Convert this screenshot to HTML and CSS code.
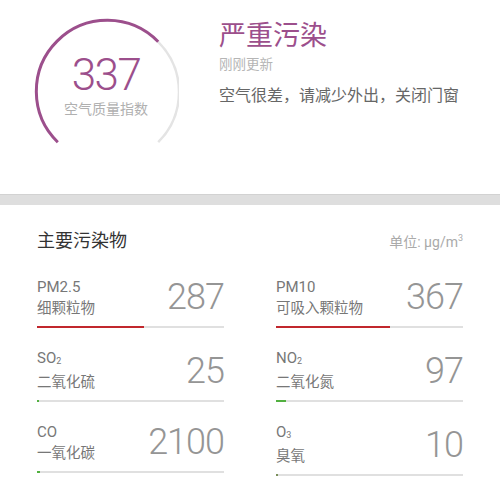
FILE: index.html
```html
<!DOCTYPE html>
<html lang="zh-CN">
<head>
<meta charset="utf-8">
<title>空气质量</title>
<link rel="stylesheet" href="styles.css">
</head>
<body>
<header class="summary">
  <div class="gauge">
    <svg class="gauge-arc" width="146" height="130" viewBox="0 0 146 130">
      <path d="M125.2 24.8 A71 71 0 0 1 125.2 125.2" fill="none" stroke="#e4e4e4" stroke-width="2.5"/>
      <path d="M24.8 125.2 A71 71 0 1 1 125.2 24.8" fill="none" stroke="#9c4f8c" stroke-width="3"/>
    </svg>
    <div class="gauge-text">
      <div class="aqi">337</div>
      <div class="aqi-label">空气质量指数</div>
    </div>
  </div>
  <div class="status">
    <div class="level">严重污染</div>
    <div class="updated">刚刚更新</div>
    <div class="advice">空气很差，请减少外出，关闭门窗</div>
  </div>
</header>
<div class="divider"></div>
<section class="pollutants">
  <div class="section-head">
    <h2 class="section-title">主要污染物</h2>
    <div class="unit">单位: μg/m<sup>3</sup></div>
  </div>
  <div class="grid">
    <div class="item">
      <div class="item-row">
        <div class="names"><div class="code">PM2.5</div><div class="cn">细颗粒物</div></div>
        <div class="value">287</div>
      </div>
      <div class="bar"><div class="fill red" style="width:57%"></div></div>
    </div>
    <div class="item">
      <div class="item-row">
        <div class="names"><div class="code">PM10</div><div class="cn">可吸入颗粒物</div></div>
        <div class="value">367</div>
      </div>
      <div class="bar"><div class="fill red" style="width:61%"></div></div>
    </div>
    <div class="item">
      <div class="item-row">
        <div class="names"><div class="code">SO<span class="sub">2</span></div><div class="cn">二氧化硫</div></div>
        <div class="value">25</div>
      </div>
      <div class="bar"><div class="fill green" style="width:2px"></div></div>
    </div>
    <div class="item">
      <div class="item-row">
        <div class="names"><div class="code">NO<span class="sub">2</span></div><div class="cn">二氧化氮</div></div>
        <div class="value">97</div>
      </div>
      <div class="bar"><div class="fill green" style="width:10px"></div></div>
    </div>
    <div class="item">
      <div class="item-row">
        <div class="names"><div class="code">CO</div><div class="cn">一氧化碳</div></div>
        <div class="value">2100</div>
      </div>
      <div class="bar"><div class="fill green" style="width:3px"></div></div>
    </div>
    <div class="item">
      <div class="item-row">
        <div class="names"><div class="code">O<span class="sub">3</span></div><div class="cn">臭氧</div></div>
        <div class="value">10</div>
      </div>
      <div class="bar"><div class="fill olive" style="width:2px"></div></div>
    </div>
  </div>
</section>
</body>
</html>
```
FILE: styles.css
```css
html, body {
  margin: 0;
  padding: 0;
  background: #fff;
  font-family: Roboto, "Noto Sans CJK SC", sans-serif;
}

.summary {
  height: 194px;
  display: flex;
  align-items: flex-start;
  box-sizing: border-box;
  padding: 17px 0 0 33px;
}

.gauge {
  display: grid;
  width: 146px;
  height: 130px;
}

.gauge-arc {
  grid-area: 1 / 1;
  display: block;
}

.gauge-text {
  grid-area: 1 / 1;
  display: flex;
  flex-direction: column;
  align-items: center;
  padding-top: 36px;
}

.aqi {
  font-size: 44px;
  line-height: 44px;
  font-weight: 300;
  color: #9c4f8c;
  letter-spacing: -1.5px;
}

.aqi-label {
  font-size: 14px;
  line-height: 18px;
  color: #b0b0b0;
  margin-top: 2px;
  font-family: "Noto Sans CJK SC", sans-serif;
}

.status {
  margin-left: 40px;
  padding-top: 3px;
}

.level {
  font-size: 27px;
  line-height: 27px;
  color: #9c4f8c;
  font-family: "Noto Sans CJK SC", sans-serif;
}

.updated {
  font-size: 13.5px;
  line-height: 15px;
  color: #b5b5b5;
  margin-top: 9px;
  font-family: "Noto Sans CJK SC", sans-serif;
}

.advice {
  font-size: 16px;
  line-height: 16px;
  color: #666;
  margin-top: 15px;
  font-family: "Noto Sans CJK SC", sans-serif;
}

.divider {
  height: 10px;
  background: #dedede;
  border-top: 1px solid #d2d2d2;
}

.pollutants {
  padding: 23px 37px 0 37px;
}

.section-head {
  display: flex;
  justify-content: space-between;
  align-items: baseline;
}

.section-title {
  margin: 0;
  font-size: 18px;
  line-height: 22px;
  font-weight: normal;
  color: #333;
  font-family: "Noto Sans CJK SC", sans-serif;
}

.unit {
  font-size: 14px;
  color: #aaa;
}

.unit sup {
  font-size: 9px;
  vertical-align: 6px;
  line-height: 0;
}

.grid {
  display: grid;
  grid-template-columns: 187px 187px;
  column-gap: 52px;
  row-gap: 20px;
  margin-top: 26px;
}

.item-row {
  display: flex;
  justify-content: space-between;
  align-items: flex-end;
}

.code, .cn {
  font-size: 15px;
  line-height: 20px;
  color: #777;
}

.cn {
  font-family: "Noto Sans CJK SC", sans-serif;
  font-size: 14.5px;
}

.sub {
  font-size: 9px;
  vertical-align: -1px;
}

.value {
  font-size: 36px;
  line-height: 36px;
  font-weight: 300;
  color: #959595;
  letter-spacing: -1px;
  margin-bottom: 2px;
}

.bar {
  height: 2px;
  background: #e0e0e0;
  margin-top: 9px;
}

.fill {
  height: 100%;
}

.red { background: #c1272d; }
.green { background: #52b040; }
.olive { background: #7a8f5a; }
```
